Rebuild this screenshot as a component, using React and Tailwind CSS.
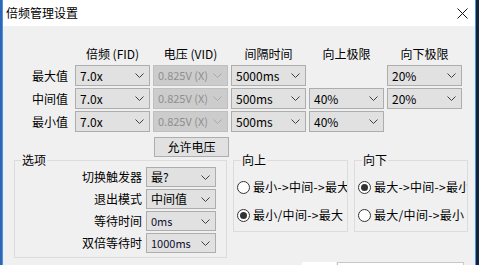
import React from "react";

const font = "font-['Noto_Sans_CJK_SC','Microsoft_YaHei',sans-serif]";

function Chevron({ disabled }) {
  return (
    <svg width="9" height="5" viewBox="0 0 9 5" className="shrink-0">
      <polyline
        points="0.5,0.5 4.5,4.5 8.5,0.5"
        fill="none"
        stroke={disabled ? "#a8a8a8" : "#404040"}
        strokeWidth="1"
      />
    </svg>
  );
}

function Select({ value, disabled, className = "w-[75px] h-[21px]", textClass = "text-[12px]" }) {
  return (
    <div
      className={`${className} flex items-center justify-between border pl-[4px] pr-[5px] ${
        disabled
          ? "bg-[#cccccc] border-[#bfbfbf] text-[#8f8f8f]"
          : "bg-[#e1e1e1] border-[#adadad] text-black"
      }`}
    >
      <span className={`${textClass} leading-none whitespace-nowrap`}>{value}</span>
      <Chevron disabled={disabled} />
    </div>
  );
}

function Radio({ checked, label }) {
  return (
    <div className="flex items-center gap-[3px] h-[16px] pl-[3px] overflow-hidden whitespace-nowrap">
      <div className="w-[13px] h-[13px] shrink-0 rounded-full border border-[#333333] bg-white flex items-center justify-center">
        {checked && <div className="w-[7px] h-[7px] rounded-full bg-[#333333]" />}
      </div>
      <span className="text-[12px] leading-none tracking-[0.3px]">{label}</span>
    </div>
  );
}

const rows = [
  { label: "最大值", fid: "7.0x", time: "5000ms", up: null, down: "20%" },
  { label: "中间值", fid: "7.0x", time: "500ms", up: "40%", down: "20%" },
  { label: "最小值", fid: "7.0x", time: "500ms", up: "40%", down: null },
];

const options = [
  { label: "切换触发器", value: "最?", small: false },
  { label: "退出模式", value: "中间值", small: false },
  { label: "等待时间", value: "0ms", small: true },
  { label: "双倍等待时", value: "1000ms", small: true },
];

export default function App() {
  return (
    <div className={`w-[479px] h-[265px] overflow-hidden flex bg-[#10243d] ${font} text-black`}>
      <div className="w-[2px] bg-[#2e67b5]" />
      <div className="w-[474px] h-[265px] border-x border-[#4d93e0] bg-[#f0f0f0] flex flex-col overflow-hidden">
        {/* title bar */}
        <div className="h-[26px] shrink-0 bg-white flex items-center justify-between pl-[3px] pr-[7px]">
          <span className="text-[12px] leading-none">倍频管理设置</span>
          <svg width="11" height="11" viewBox="0 0 11 11">
            <path d="M0.5 0.5 L10.5 10.5 M10.5 0.5 L0.5 10.5" stroke="#111" strokeWidth="1" />
          </svg>
        </div>

        {/* table */}
        <div className="pt-[19px] flex flex-col">
          <div className="flex h-[18px] items-center text-[12px] leading-none">
            <div className="w-[65px] mr-[7px]" />
            <div className="flex gap-[3px]">
              <div className="w-[75px] text-center">倍频 (FID)</div>
              <div className="w-[75px] text-center">电压 (VID)</div>
              <div className="w-[75px] text-center">间隔时间</div>
              <div className="w-[75px] text-center">向上极限</div>
              <div className="w-[75px] text-center">向下极限</div>
            </div>
          </div>
          <div className="mt-[2px] flex flex-col gap-[2px]">
            {rows.map((r) => (
              <div key={r.label} className="flex items-center">
                <div className="w-[65px] mr-[7px] text-right text-[12px] leading-none">{r.label}</div>
                <div className="flex gap-[3px]">
                  <Select value={r.fid} />
                  <Select value="0.825V (X)" disabled textClass="text-[11px]" />
                  <Select value={r.time} />
                  {r.up ? <Select value={r.up} /> : <div className="w-[75px]" />}
                  {r.down ? <Select value={r.down} /> : <div className="w-[75px]" />}
                </div>
              </div>
            ))}
          </div>
          <div className="mt-[5px] ml-[151px] w-[75px] h-[20px] border border-[#adadad] bg-[#e1e1e1] flex items-center justify-center text-[12px] leading-none">
            允许电压
          </div>
        </div>

        {/* groups */}
        <div className="mt-[-4px] ml-[11px] flex items-start">
          <fieldset className="min-w-0 shrink-0 w-[213px] border border-[#dcdcdc] pb-[4px]">
            <legend className="ml-[6px] px-[1px] h-[14px] text-[12px] leading-[14px]">选项</legend>
            <div className="flex flex-col gap-[2px]">
              {options.map((o) => (
                <div key={o.label} className="flex items-center">
                  <div className="w-[127px] mr-[4px] text-right text-[12px] leading-none whitespace-nowrap">{o.label}</div>
                  <Select
                    value={o.value}
                    className="w-[70px] h-[20px]"
                    textClass={o.small ? "text-[11px] text-[#101030]" : "text-[12px]"}
                  />
                </div>
              ))}
            </div>
          </fieldset>

          <fieldset className="min-w-0 shrink-0 ml-[6px] w-[115px] border border-[#dcdcdc] pb-[8px]">
            <legend className="ml-[7px] px-[1px] h-[14px] text-[12px] leading-[14px]">向上</legend>
            <div className="mt-[12px] flex flex-col gap-[12px]">
              <Radio label="最小->中间->最大" />
              <Radio checked label="最小/中间->最大" />
            </div>
          </fieldset>

          <fieldset className="min-w-0 shrink-0 ml-[6px] w-[114px] border border-[#dcdcdc] pb-[8px]">
            <legend className="ml-[7px] px-[1px] h-[14px] text-[12px] leading-[14px]">向下</legend>
            <div className="mt-[12px] flex flex-col gap-[12px]">
              <Radio checked label="最大->中间->最小" />
              <Radio label="最大/中间->最小" />
            </div>
          </fieldset>
        </div>

        {/* cut-off bottom row */}
        <div className="mt-[4px] ml-[299px] flex shrink-0">
          <div className="w-[34px] h-[20px] bg-white" />
          <div className="ml-[1px] w-[127px] h-[20px] bg-white border border-[#c8c8c8]" />
        </div>
      </div>
    </div>
  );
}
